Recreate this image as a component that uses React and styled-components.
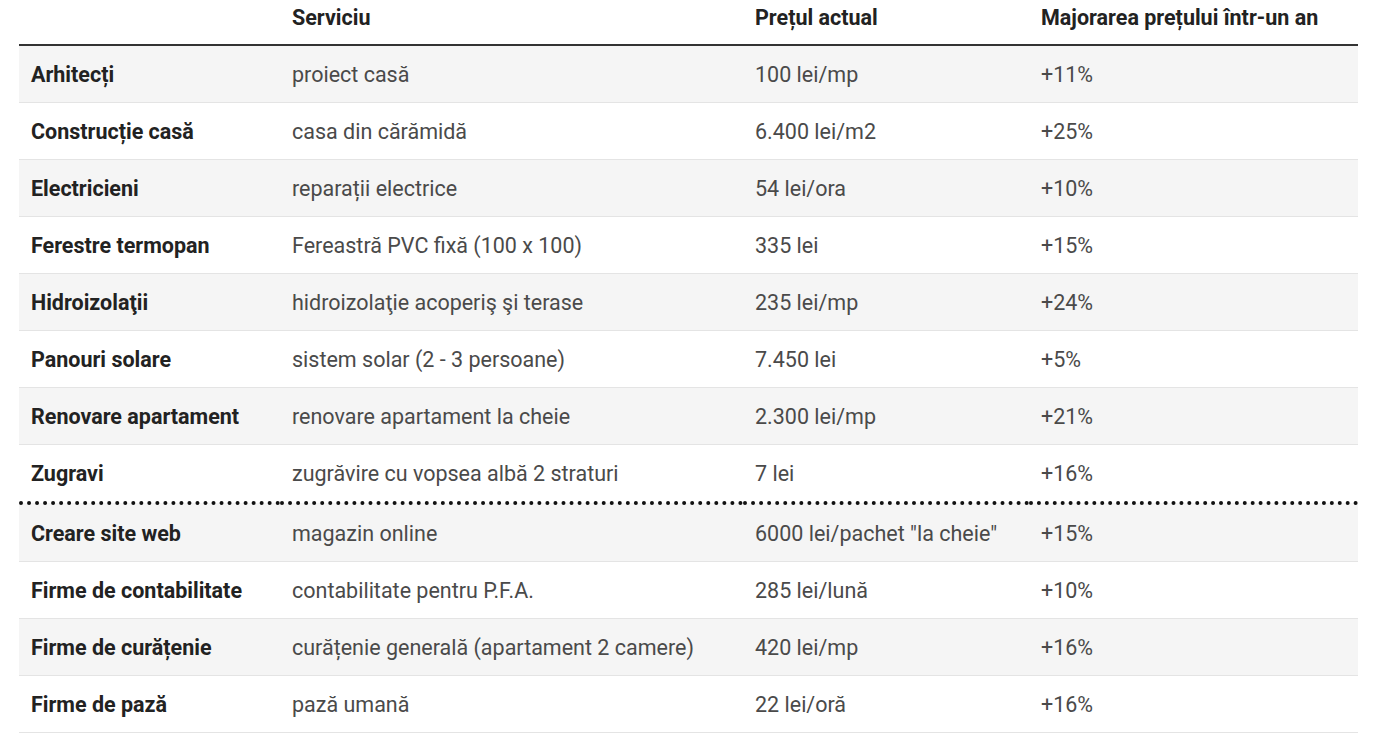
import React from "react";
import styled, { createGlobalStyle } from "styled-components";

const Global = createGlobalStyle`
  html, body { margin: 0; padding: 0; background: #fff; }
  body { font-family: Roboto, "Noto Sans", sans-serif; }
`;

const Wrap = styled.div`
  padding: 0 17px 0 19px;
`;

const Table = styled.table`
  width: 100%;
  border-collapse: collapse;
  table-layout: fixed;
  font-size: 21.5px;
  color: #444;
`;

const Th = styled.th`
  text-align: left;
  font-weight: 700;
  color: #222;
  padding: 1px 12px 0;
  height: 45px;
  box-sizing: border-box;
  vertical-align: top;
  line-height: 34px;
  border-bottom: 2px solid #333;
  white-space: nowrap;
`;

const Row = styled.tr`
  background: ${(p) => (p.$shade ? "#f5f5f5" : "#fff")};
  border-bottom: ${(p) => (p.$split ? "4px dotted #111" : "1px solid #e4e4e4")};
  & > td {
    height: ${(p) => p.$h}px;
  }
`;

const Td = styled.td`
  padding: 2px 12px 0;
  box-sizing: border-box;
  line-height: 24px;
  color: ${(p) => (p.$strong ? "#222" : "#4a4a4a")};
  font-weight: ${(p) => (p.$strong ? 700 : 400)};
  white-space: nowrap;
`;

const rows = [
  ["Arhitecți", "proiect casă", "100 lei/mp", "+11%"],
  ["Construcție casă", "casa din cărămidă", "6.400 lei/m2", "+25%"],
  ["Electricieni", "reparații electrice", "54 lei/ora", "+10%"],
  ["Ferestre termopan", "Fereastră PVC fixă (100 x 100)", "335 lei", "+15%"],
  ["Hidroizolaţii", "hidroizolaţie acoperiş şi terase", "235 lei/mp", "+24%"],
  ["Panouri solare", "sistem solar (2 - 3 persoane)", "7.450 lei", "+5%"],
  ["Renovare apartament", "renovare apartament la cheie", "2.300 lei/mp", "+21%"],
  ["Zugravi", "zugrăvire cu vopsea albă 2 straturi", "7 lei", "+16%"],
  ["Creare site web", "magazin online", "6000 lei/pachet \"la cheie\"", "+15%"],
  ["Firme de contabilitate", "contabilitate pentru P.F.A.", "285 lei/lună", "+10%"],
  ["Firme de curățenie", "curățenie generală (apartament 2 camere)", "420 lei/mp", "+16%"],
  ["Firme de pază", "pază umană", "22 lei/oră", "+16%"],
];

export default function App() {
  return (
    <Wrap>
      <Global />
      <Table>
        <colgroup>
          <col style={{ width: 261 }} />
          <col style={{ width: 463 }} />
          <col style={{ width: 286 }} />
          <col />
        </colgroup>
        <thead>
          <tr>
            <Th></Th>
            <Th>Serviciu</Th>
            <Th>Prețul actual</Th>
            <Th>Majorarea prețului într-un an</Th>
          </tr>
        </thead>
        <tbody>
          {rows.map((r, i) => {
            const shade = i < 8 ? i % 2 === 0 : (i - 8) % 2 === 0;
            const h = i === 7 ? 59 : i === 8 ? 58 : 57;
            return (
              <Row key={i} $shade={shade} $split={i === 7} $h={h}>
                <Td $strong>{r[0]}</Td>
                <Td>{r[1]}</Td>
                <Td>{r[2]}</Td>
                <Td>{r[3]}</Td>
              </Row>
            );
          })}
        </tbody>
      </Table>
    </Wrap>
  );
}
